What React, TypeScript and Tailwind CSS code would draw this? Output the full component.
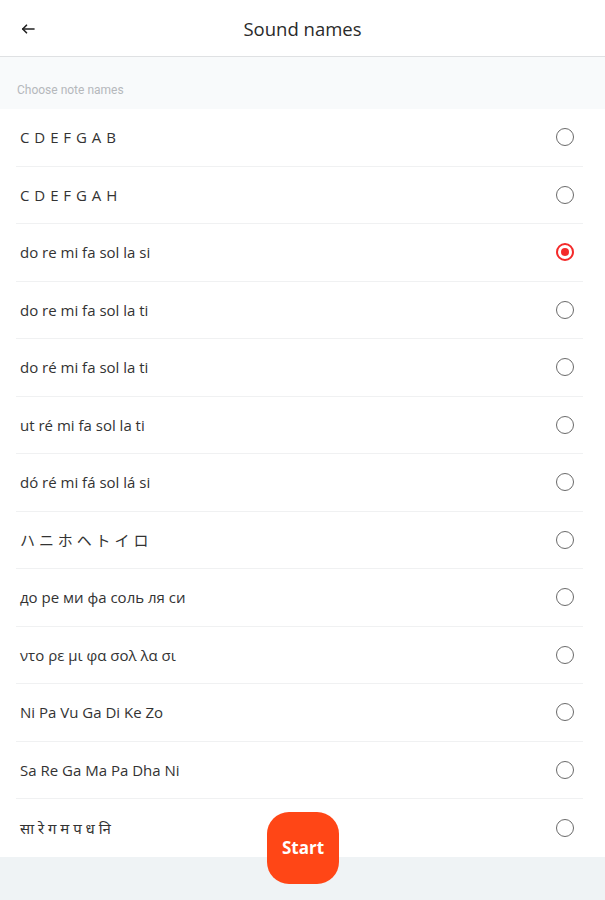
import React, { useState } from "react";

const items = [
  "C D E F G A B",
  "C D E F G A H",
  "do re mi fa sol la si",
  "do re mi fa sol la ti",
  "do ré mi fa sol la ti",
  "ut ré mi fa sol la ti",
  "dó ré mi fá sol lá si",
  "ハ ニ ホ ヘ ト イ ロ",
  "до ре ми фа соль ля си",
  "ντο ρε μι φα σολ λα σι",
  "Ni Pa Vu Ga Di Ke Zo",
  "Sa Re Ga Ma Pa Dha Ni",
  "सा रे ग म प ध नि",
];

export default function App() {
  const [sel, setSel] = useState(2);
  return (
    <div
      className="relative w-[605px] h-[900px] bg-[#eff3f5] overflow-hidden"
      style={{ fontFamily: '"Open Sans", "Noto Sans", "Noto Sans CJK JP", sans-serif' }}
    >
      <div className="h-[57px] bg-white border-b border-[#dfe1e3] flex items-center relative">
        <div className="absolute left-[19px] top-[20px]">
          <svg width="18" height="18" viewBox="0 0 24 24" fill="none" stroke="#222" strokeWidth="2.2" strokeLinecap="round" strokeLinejoin="round">
            <path d="M20 12H5" />
            <path d="M10 7l-5 5 5 5" />
          </svg>
        </div>
        <div className="w-full text-center text-[18.5px] text-[#2a2a2a] pt-[2px]">Sound names</div>
      </div>
      <div className="bg-[#f8fafb] h-[52px] flex items-end pb-[10px] pl-[17px]">
        <span className="text-[12px] text-[#b5b8bb]" style={{ fontFamily: "Roboto, sans-serif" }}>Choose note names</span>
      </div>
      <div className="bg-white">
        {items.map((t, i) => (
          <div key={i} className="pl-[16px] pr-[22px]" onClick={() => setSel(i)}>
            <div className={`h-[57.5px] flex items-center justify-between pl-[4px] pr-[9px] ${i < items.length - 1 ? "border-b border-[#f0f1f2]" : ""}`}>
              <span className={`text-[15px] text-[#333] ${i < 2 ? "tracking-[0.5px]" : ""}`}>{t}</span>
              {sel === i ? (
                <div className="w-[18px] h-[18px] rounded-full border-2 border-[#f42a2a] flex items-center justify-center">
                  <div className="w-[8px] h-[8px] rounded-full bg-[#f42a2a]" />
                </div>
              ) : (
                <div className="w-[18px] h-[18px] rounded-full border-[1.5px] border-[#6a6a6a]" />
              )}
            </div>
          </div>
        ))}
      </div>
      <div className="absolute left-[267px] top-[812px] w-[72px] h-[72px] rounded-[22px] bg-[#ff4616] flex items-center justify-center">
        <span className="text-white text-[17px] font-bold">Start</span>
      </div>
    </div>
  );
}
